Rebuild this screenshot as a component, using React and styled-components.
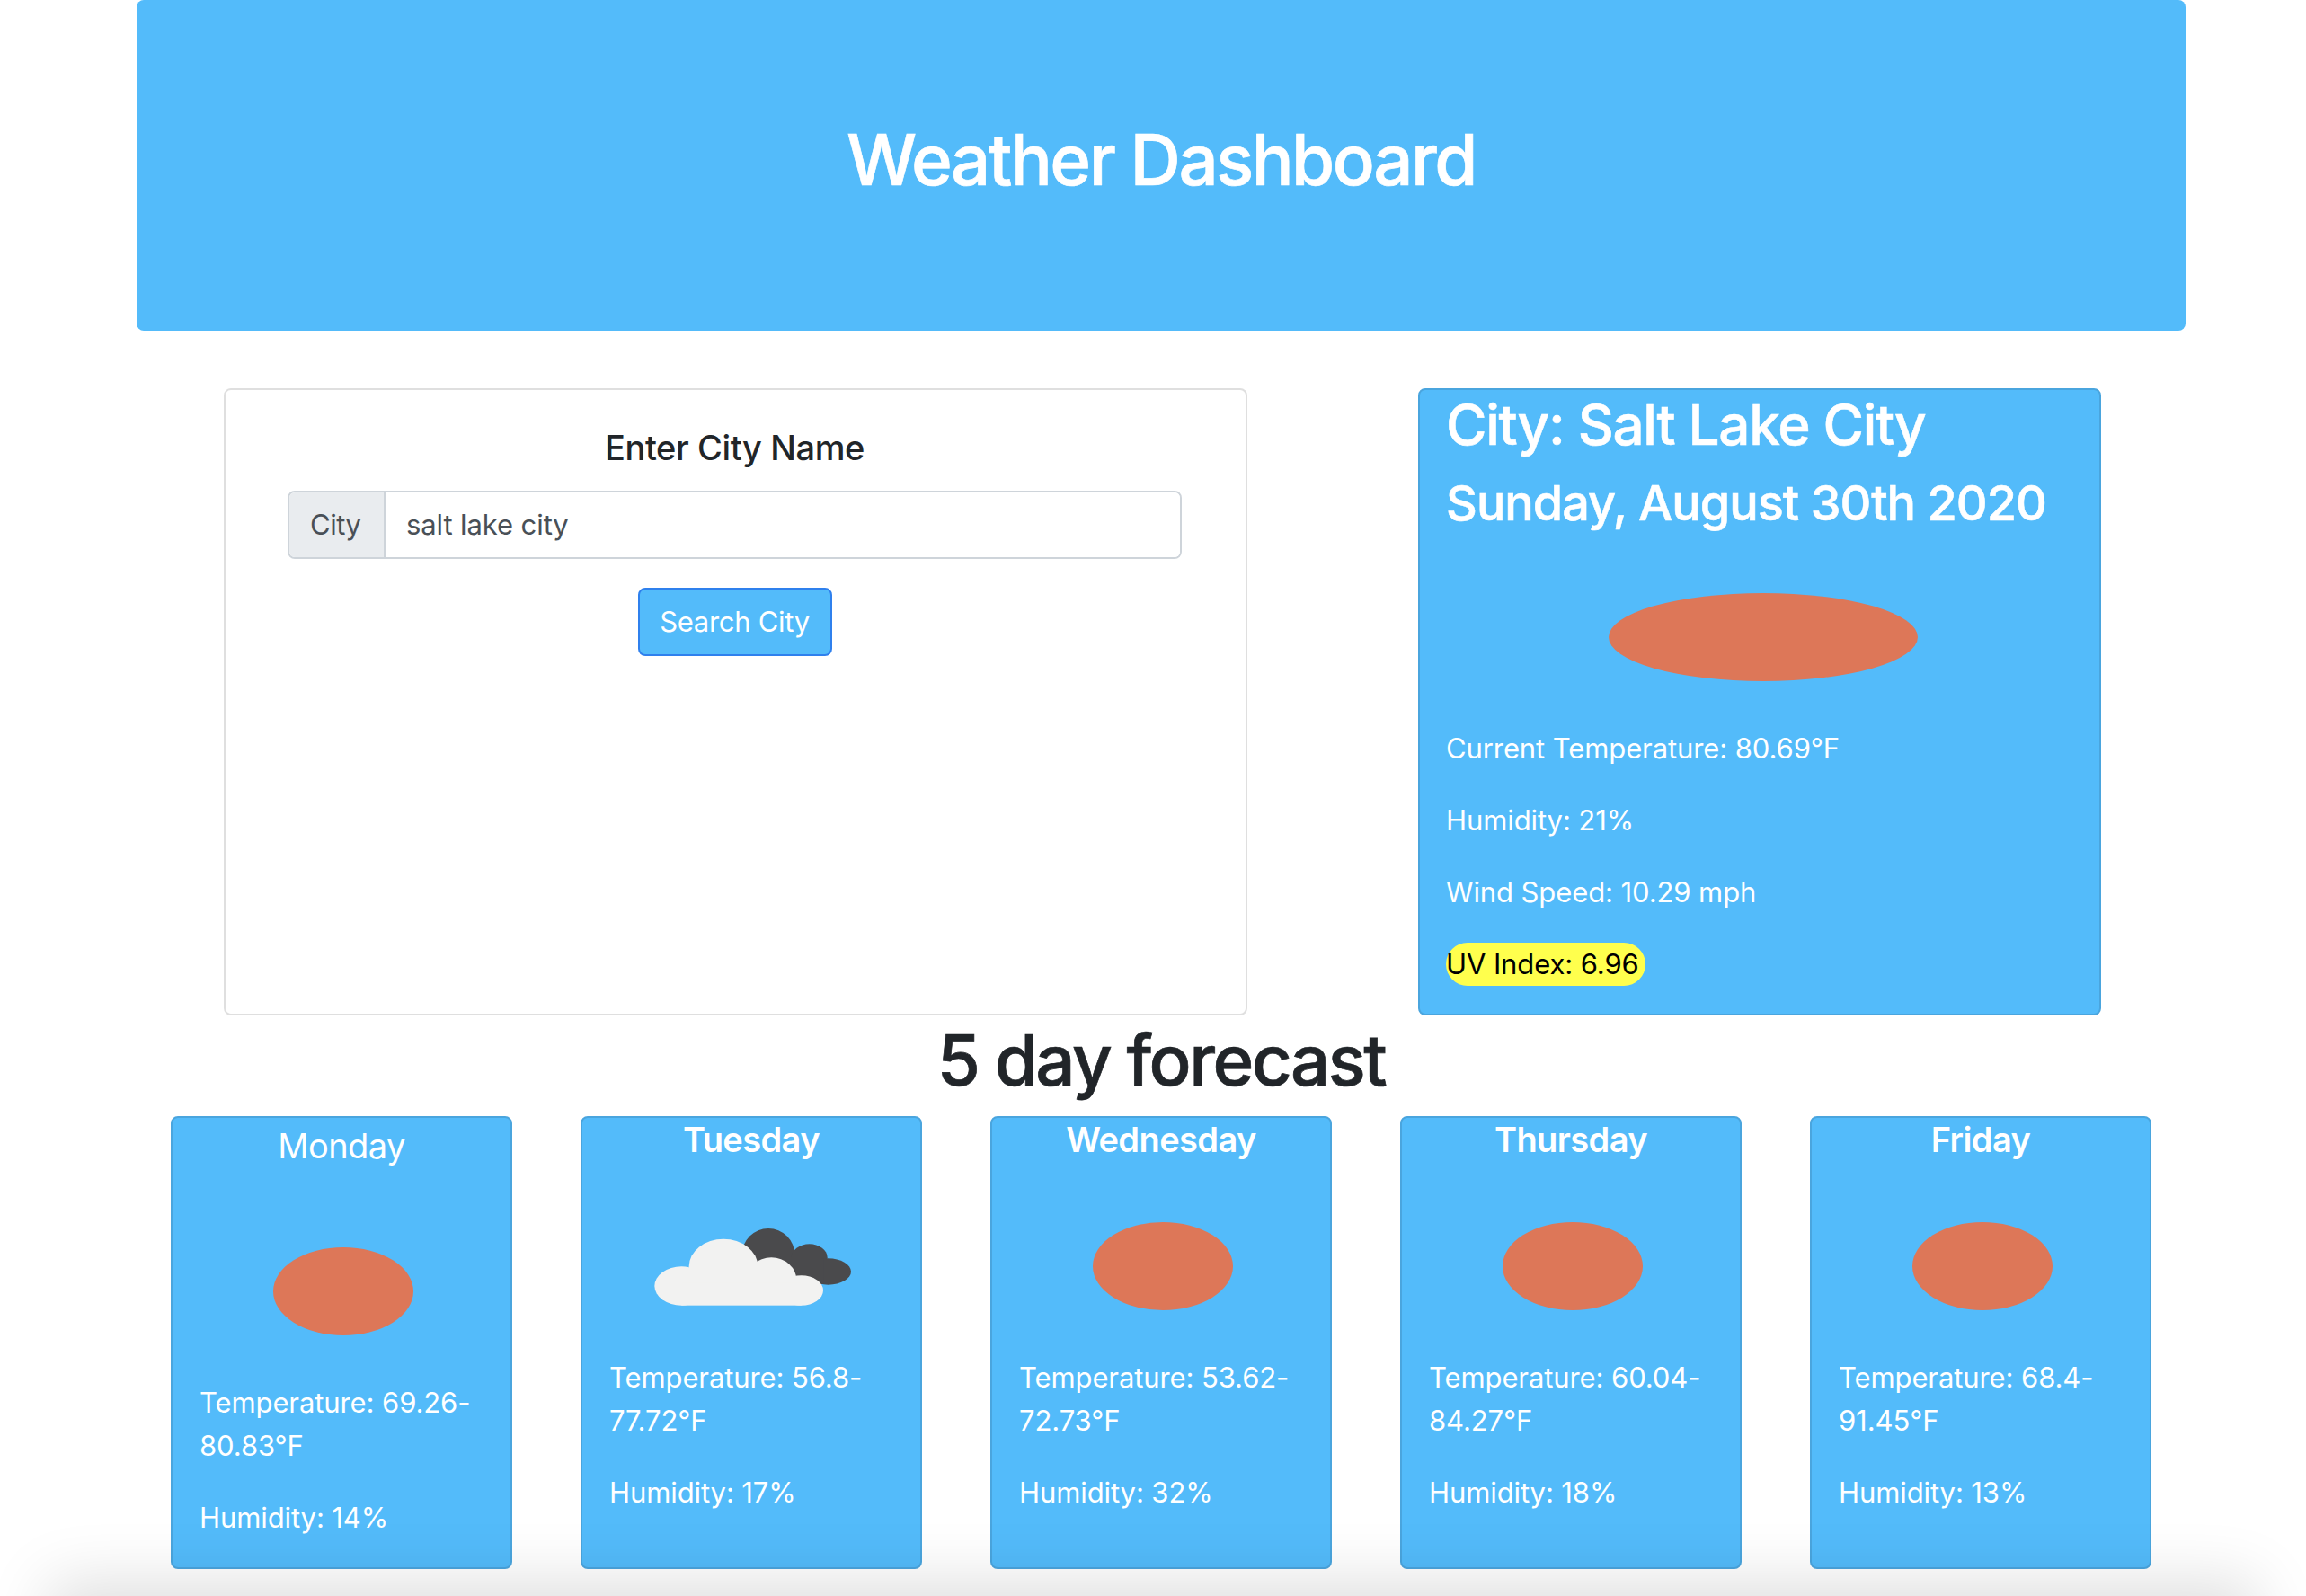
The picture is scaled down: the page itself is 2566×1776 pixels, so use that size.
import React from 'react';
import styled, { createGlobalStyle } from 'styled-components';

const Global = createGlobalStyle`
  html, body {
    margin: 0;
    padding: 0;
    background: #fff;
    overflow: hidden;
  }
  body {
    font-family: Inter, "Liberation Sans", sans-serif;
    font-size: 32px;
    line-height: 48px;
    color: #212529;
  }
`;

const Page = styled.div`
  position: relative;
  width: 2566px;
  height: 1776px;
  overflow: hidden;
`;

const Container = styled.div`
  width: 2280px;
  margin-left: 152px;
`;

const Jumbotron = styled.header`
  height: 368px;
  padding-top: 130px;
  box-sizing: border-box;
  background: #53bbfa;
  border-radius: 8px;
  text-align: center;
`;

const Title = styled.h1`
  margin: 0;
  font-size: 78px;
  font-weight: 500;
  line-height: 96px;
  letter-spacing: -2.5px;
  -webkit-text-stroke: 0.7px #fff;
  color: #fff;
`;

const TopRow = styled.section`
  display: grid;
  grid-template-columns: 1139px 760px;
  grid-template-rows: 698px;
  column-gap: 190px;
  margin: 64px 0 0 97px;
`;

const SearchCard = styled.div`
  box-sizing: border-box;
  padding: 40px 71px 0 69px;
  border: 2px solid #dfdfdf;
  border-radius: 8px;
  text-align: center;
`;

const SearchTitle = styled.h5`
  margin: 0 0 24px;
  font-size: 38px;
  font-weight: 500;
  line-height: 48px;
  letter-spacing: -0.4px;
`;

const InputGroup = styled.div`
  display: flex;
  height: 76px;
  box-sizing: border-box;
  border: 2px solid #ced4da;
  border-radius: 8px;
  overflow: hidden;
  text-align: left;
`;

const Addon = styled.span`
  width: 107px;
  box-sizing: border-box;
  padding-left: 23px;
  line-height: 72px;
  font-size: 31px;
  letter-spacing: -0.5px;
  color: #495057;
  background: #e9ecef;
  border-right: 2px solid #ced4da;
`;

const CityInput = styled.input`
  flex: 1;
  min-width: 0;
  padding: 0 23px;
  border: 0;
  outline: 0;
  font: inherit;
  font-size: 31px;
  letter-spacing: -0.1px;
  color: #495057;
`;

const SearchButton = styled.button`
  display: block;
  width: 216px;
  height: 76px;
  margin: 32px auto 0;
  padding: 0;
  border: 2px solid #2f80ed;
  border-radius: 8px;
  background: #53bbfa;
  color: #fff;
  font: inherit;
  font-size: 31px;
  letter-spacing: -0.3px;
`;

const Panel = styled.article`
  box-sizing: border-box;
  border: 2px solid #4aa5de;
  border-radius: 8px;
  background: #53bbfa;
  color: #fff;
  padding: 0 30px;
`;

const CurrentPanel = styled(Panel)`
  padding: 1px 29px 0;
`;

const CityName = styled.h2`
  margin: 0 0 16px;
  font-size: 62px;
  font-weight: 500;
  line-height: 76px;
  letter-spacing: -1.3px;
  -webkit-text-stroke: 0.6px #fff;
`;

const DateLine = styled.h3`
  margin: 0 0 16px;
  font-size: 54px;
  font-weight: 500;
  line-height: 66px;
  letter-spacing: -1px;
  -webkit-text-stroke: 0.6px #fff;
`;

const ImageBox = styled.div`
  display: flex;
  align-items: center;
  justify-content: center;
  height: ${({ $height }) => $height}px;
  padding-top: ${({ $top }) => $top || 0}px;
  box-sizing: border-box;

  svg {
    filter: blur(0.7px);
  }
`;

const Line = styled.p`
  margin: 0 0 32px;
  font-size: 31px;
  letter-spacing: -0.1px;
`;

const UvBadge = styled.span`
  display: inline-block;
  padding-right: 7px;
  border-radius: 24px;
  background: #ffff4d;
  color: #000;
`;

const ForecastTitle = styled.h2`
  margin: 2px 0 14px;
  font-size: 78px;
  font-weight: 500;
  line-height: 96px;
  letter-spacing: -2.5px;
  -webkit-text-stroke: 0.7px #212529;
  text-align: center;
`;

const ForecastRow = styled.section`
  display: flex;
  gap: 76px;
  margin-left: 38px;
`;

const DayCard = styled(Panel)`
  width: 380px;
  height: 504px;
  flex: none;
`;

const DayName = styled.h5`
  margin: ${({ $plain }) => ($plain ? '7px' : '0')} 0 0;
  height: ${({ $plain }) => ($plain ? '70px' : '49px')};
  font-size: 38px;
  font-weight: ${({ $plain }) => ($plain ? 400 : 600)};
  line-height: 48px;
  letter-spacing: -0.6px;
  text-align: center;
`;

const Shade = styled.div`
  position: absolute;
  left: 70px;
  right: 70px;
  bottom: -70px;
  height: 70px;
  box-shadow: 0 0 70px 16px rgba(0, 0, 0, 0.13);
  pointer-events: none;
`;

const Sun = ({ wide }) =>
  wide ? (
    <svg width="352" height="100" viewBox="0 0 352 100">
      <ellipse cx="180" cy="50" rx="172" ry="49" fill="#dd7758" />
    </svg>
  ) : (
    <svg width="160" height="100" viewBox="0 0 160 100">
      <ellipse cx="82" cy="50" rx="78" ry="49" fill="#dd7758" />
    </svg>
  );

const Clouds = () => (
  <svg width="292" height="130" viewBox="0 9 876 390">
    <g fill="#4a4a4c">
      <circle cx="495" cy="166" r="88" />
      <ellipse cx="632" cy="175" rx="60" ry="45" />
      <ellipse cx="695" cy="222" rx="76" ry="44" />
      <rect x="480" y="180" width="200" height="84" />
    </g>
    <g fill="#f2f2f1">
      <ellipse cx="205" cy="270" rx="90" ry="65" />
      <ellipse cx="345" cy="205" rx="115" ry="92" />
      <ellipse cx="505" cy="250" rx="84" ry="75" />
      <ellipse cx="605" cy="285" rx="73" ry="50" />
      <rect x="205" y="260" width="400" height="75" />
    </g>
  </svg>
);

const days = [
  { name: 'Monday', temp: '69.26-80.83', humidity: 14, plain: true },
  { name: 'Tuesday', temp: '56.8-77.72', humidity: 17, cloudy: true },
  { name: 'Wednesday', temp: '53.62-72.73', humidity: 32 },
  { name: 'Thursday', temp: '60.04-84.27', humidity: 18 },
  { name: 'Friday', temp: '68.4-91.45', humidity: 13 },
];

const App = () => (
  <Page>
    <Global />
    <Container>
      <Jumbotron>
        <Title>Weather Dashboard</Title>
      </Jumbotron>
      <TopRow>
        <SearchCard>
          <SearchTitle>Enter City Name</SearchTitle>
          <InputGroup>
            <Addon>City</Addon>
            <CityInput defaultValue="salt lake city" />
          </InputGroup>
          <SearchButton>Search City</SearchButton>
        </SearchCard>
        <CurrentPanel>
          <CityName>City: Salt Lake City</CityName>
          <DateLine>Sunday, August 30th 2020</DateLine>
          <ImageBox $height={200}>
            <Sun wide />
          </ImageBox>
          <Line>Current Temperature: 80.69°F</Line>
          <Line>Humidity: 21%</Line>
          <Line>Wind Speed: 10.29 mph</Line>
          <Line>
            <UvBadge>UV Index: 6.96</UvBadge>
          </Line>
        </CurrentPanel>
      </TopRow>
      <ForecastTitle>5 day forecast</ForecastTitle>
      <ForecastRow>
        {days.map((day) => (
          <DayCard key={day.name}>
            <DayName $plain={day.plain}>{day.name}</DayName>
            <ImageBox $height={216} $top={16}>
              {day.cloudy ? <Clouds /> : <Sun />}
            </ImageBox>
            <Line>Temperature: {day.temp}°F</Line>
            <Line>Humidity: {day.humidity}%</Line>
          </DayCard>
        ))}
      </ForecastRow>
    </Container>
    <Shade />
  </Page>
);

export default App;
